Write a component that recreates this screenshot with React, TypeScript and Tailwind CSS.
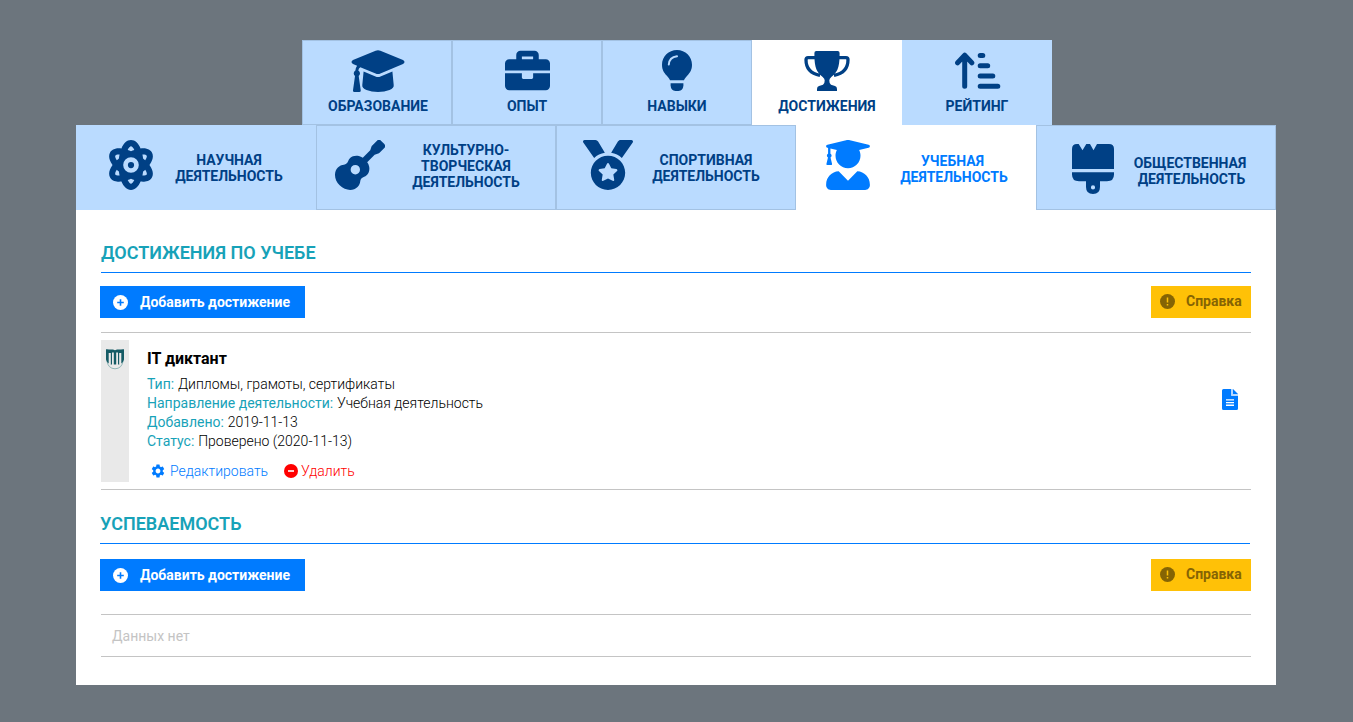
import React from "react";
import { FaAtom, FaBriefcase, FaGuitar, FaMedal, FaUserGraduate } from "react-icons/fa";
import { MdSettings } from "react-icons/md";

function CapIcon() {
  return (
    <svg width="54" height="43" viewBox="0 0 54 43" fill="currentColor" className="-ml-px">
      <path d="M24.6 .8Q27 -.2 29.4 .8L52 10.1Q55 12 52 13.9L29.4 23.6Q27 24.6 24.6 23.6L9.3 17.2Q7.7 18.2 7.3 20.4Q9 21.5 9 23.3Q9 25 7.7 26L9.7 40.2Q10 42 8.3 42H3.5Q1.7 42 2 40.2L4 26Q2.7 25 2.7 23.3Q2.7 21.4 4.4 20.4Q4.7 17.7 6.1 15.8L2 13.9Q-1 12 2 10.1Z" />
      <path d="M12.6 21.6L24.5 26.6Q27 27.6 29.5 26.6L41.4 21.6L42.7 35Q43.2 38.2 38.5 40Q33.5 42 27 42Q20.5 42 15.5 40Q10.8 38.2 11.3 35Z" />
    </svg>
  );
}

function BulbIcon() {
  return (
    <svg width="30" height="42" viewBox="0 0 30 42" fill="currentColor">
      <path d="M15 0C23.4 0 30 6.5 30 14.7C30 19.7 28 22.5 25.4 25.6C23.4 28 22.5 29 22 30.2H8C7.5 29 6.6 28 4.6 25.6C2 22.5 0 19.7 0 14.7C0 6.5 6.6 0 15 0Z" />
      <path d="M8.6 33.2H21.4V35.6Q21 41 16.5 41H13.5Q9 41 8.6 35.6Z" />
      <path d="M6.8 14.5Q7.3 7.3 15 6.3" fill="none" stroke="#badbff" strokeWidth="2" strokeLinecap="round" />
    </svg>
  );
}

function TrophyIcon() {
  return (
    <svg width="46" height="40" viewBox="0 0 46 40" fill="currentColor">
      <path d="M12.3 0H33.7Q35.6 0 35.6 2C35.6 12 35.2 20.5 27.3 26Q25.3 27.5 25.3 29.5Q25.3 33 27 33.7L31 35Q33 35.7 33 38V40H13V38Q13 35.7 15 35L19 33.7Q20.7 33 20.7 29.5Q20.7 27.5 18.7 26C10.8 20.5 10.4 12 10.4 2Q10.4 0 12.3 0Z" />
      <path d="M12 6.7H4Q2 6.7 2 8.7C2 16.5 6.5 22.5 16 24.3M34 6.7H42Q44 6.7 44 8.7C44 16.5 39.5 22.5 30 24.3" fill="none" stroke="currentColor" strokeWidth="3.3" />
    </svg>
  );
}

function RatingIcon() {
  return (
    <svg width="46" height="38" viewBox="0 0 46 38" fill="none" stroke="currentColor" strokeWidth="5" strokeLinecap="round" className="ml-[2px]">
      <path d="M9.7 34.2V3.5M2.6 10.8L9.7 3.2L16.8 10.8" strokeLinejoin="round" />
      <path d="M25.2 3.5H27.8M25.2 13.7H32.7M25.2 23.9H37.8M25.2 34.2H42.8" />
    </svg>
  );
}

function BrushIcon() {
  return (
    <svg width="42" height="50" viewBox="0 0 42 50" fill="currentColor">
      <path d="M0 25V5Q0 0 5 0H6.7L10.5 6.2L14.3 0H18L21.5 6.2L25 0H37Q42 0 42 5V25Z" />
      <path fillRule="evenodd" d="M0 28.2H42V30.5Q42 37.3 35 37.3H28V43Q28 50 21 50Q14 50 14 43V37.3H7Q0 37.3 0 30.5ZM21 41.3A2.1 2.1 0 1 0 21 45.5A2.1 2.1 0 1 0 21 41.3Z" />
    </svg>
  );
}

function DocIcon() {
  return (
    <svg width="16" height="21" viewBox="0 0 16 21" className="mt-[49px] mr-[13px] ml-auto">
      <path d="M1.5 0H9.3V6.7H16V19.5Q16 21 14.5 21H1.5Q0 21 0 19.5V1.5Q0 0 1.5 0Z" fill="#007bff" />
      <path d="M11 0L16 5H11Z" fill="#007bff" />
      <path d="M9.3 0H11V5H16V6.7H9.3Z" fill="#b5d8ff" />
      <path d="M4 10.9H12M4 13.6H12M4 16.3H12" stroke="#fff" strokeWidth="1.4" />
    </svg>
  );
}

function Crest() {
  return (
    <svg width="18" height="21" viewBox="0 0 18 21">
      <path d="M1 10V12Q2 19.5 9 19.8Q16 19.5 17 12V10" fill="none" stroke="#8fb5b6" strokeWidth="1" />
      <path d="M0 .3Q1.5 -.1 3 .6H7L9 1.2L11 .6H15Q16.5 -.1 18 .3V10.5Q17.5 13 15.3 14.5V4H13.3V15.5H12V3.4H10.2V15.5H7.8V3.4H6V15.5H4.7V4H2.7V14.5Q.5 13 0 10.5Z" fill="#155b65" />
      <path d="M3.7 4V15M14.3 4V15" stroke="#e9e9e9" strokeWidth="1.4" />
    </svg>
  );
}

function TopTab({ label, icon, tone }: { label: string; icon: React.ReactNode; tone: string }) {
  return (
    <div className={`flex h-[85px] w-[150px] flex-col items-center border ${tone}`}>
      <div className="flex h-[57px] items-start pt-[9px]">{icon}</div>
      <span className="text-[14px] leading-[16px] font-bold">{label}</span>
    </div>
  );
}

function AddButton() {
  return (
    <button className="flex h-8 w-[205px] items-center bg-[#007bff] pl-[13px] text-[14px] font-bold text-white">
      <svg width="15" height="15" viewBox="0 0 15 15" className="mt-px mr-[12px]">
        <circle cx="7.5" cy="7.5" r="7.5" fill="#fff" />
        <path d="M7.5 4.2V10.8M4.2 7.5H10.8" stroke="#007bff" strokeWidth="1.6" />
      </svg>
      <span>Добавить достижение</span>
    </button>
  );
}

function HelpButton() {
  return (
    <button className="flex h-8 w-[100px] items-center bg-[#ffc107] pb-px pl-[9px] text-[14px] font-bold text-[#856404]">
      <svg width="15" height="15" viewBox="0 0 15 15" className="mr-[11px]">
        <circle cx="7.5" cy="7.5" r="7.5" fill="#856404" />
        <path d="M7.5 3.5V8.6M7.5 10V11.6" stroke="#ffc107" strokeWidth="1.5" />
      </svg>
      <span>Справка</span>
    </button>
  );
}

function Field({ name, value }: { name: string; value: string }) {
  return (
    <p className="h-[19px] whitespace-nowrap">
      <span className="mr-[0.4px] font-normal text-[#17a2b8]">{name}:</span> {value}
    </p>
  );
}

const plain = "border-[#badbff] bg-[#badbff]";
const outlined = "border-[#a3c2e3] bg-[#badbff]";
const label = "text-center text-[14px] leading-[16px] font-bold";

export default function App() {
  return (
    <div className="h-[722px] w-[1353px] bg-[#6c757d] pt-10 pl-[76px] font-['Roboto',sans-serif]">
      <nav className="ml-[226px] flex text-[#004085]">
        <TopTab label="ОБРАЗОВАНИЕ" icon={<CapIcon />} tone={`pl-[2px] ${outlined}`} />
        <TopTab label="ОПЫТ" icon={<FaBriefcase size={45} className="-mt-[2px]" />} tone={outlined} />
        <TopTab label="НАВЫКИ" icon={<BulbIcon />} tone={outlined} />
        <TopTab label="ДОСТИЖЕНИЯ" icon={<div className="pt-px"><TrophyIcon /></div>} tone="border-white bg-white" />
        <TopTab label="РЕЙТИНГ" icon={<div className="pt-0.5"><RatingIcon /></div>} tone={plain} />
      </nav>
      <nav className="flex w-[1200px] text-[#004085]">
        <div className={`flex h-[85px] w-60 border pt-[14px] pl-[32px] ${plain}`}>
          <FaAtom className="h-[50px] w-11" />
          <div className={`ml-[14px] w-[124px] pt-[12px] ${label}`}>НАУЧНАЯ ДЕЯТЕЛЬНОСТЬ</div>
        </div>
        <div className={`flex h-[85px] w-60 border pt-[14px] pl-[18px] ${outlined}`}>
          <FaGuitar size={50} />
          <div className={`ml-[18px] w-[126px] pt-[2px] ${label}`}>КУЛЬТУРНО-<br />ТВОРЧЕСКАЯ ДЕЯТЕЛЬНОСТЬ</div>
        </div>
        <div className={`flex h-[85px] w-60 border pt-[14px] pl-[26px] ${outlined}`}>
          <FaMedal size={50} />
          <div className={`ml-[10px] w-[126px] pt-[12px] ${label}`}>СПОРТИВНАЯ ДЕЯТЕЛЬНОСТЬ</div>
        </div>
        <div className="flex h-[85px] w-60 border border-white bg-white pt-[14px] pl-[29px] text-[#007bff]">
          <FaUserGraduate className="h-[50px] w-11" />
          <div className={`ml-[21px] w-[126px] pt-[13px] ${label}`}><span className="mr-[3px]">УЧЕБНАЯ</span><br />ДЕЯТЕЛЬНОСТЬ</div>
        </div>
        <div className={`flex h-[85px] w-60 border pt-[18px] pl-[35px] ${outlined}`}>
          <BrushIcon />
          <div className={`ml-[13px] w-[126px] pt-[11px] ${label}`}>ОБЩЕСТВЕННАЯ<br /><span className="ml-[3px]">ДЕЯТЕЛЬНОСТЬ</span></div>
        </div>
      </nav>
      <main className="flex h-[475px] w-[1200px] flex-col bg-white pr-[25px] pl-[24px]">
        <h2 className="ml-px h-[63px] border-b border-[#007bff] pt-[31px] text-[18px] leading-[24px] font-semibold text-[#17a2b8]">ДОСТИЖЕНИЯ ПО УЧЕБЕ</h2>
        <div className="mt-[13px] flex justify-between">
          <AddButton />
          <HelpButton />
        </div>
        <article className="mt-[14px] ml-px flex h-[158px] border-y border-[#c4c4c4] pt-[7px]">
          <div className="flex h-[142px] w-7 justify-center bg-[#e9e9e9] pt-[9px]"><Crest /></div>
          <div className="ml-[18px] text-[14px] leading-[19px] font-light text-black">
            <h3 className="mb-[5px] pt-[8px] text-[16px] leading-[22px] font-bold">IT диктант</h3>
            <Field name="Тип" value="Дипломы, грамоты, сертификаты" />
            <Field name="Направление деятельности" value="Учебная деятельность" />
            <Field name="Добавлено" value="2019-11-13" />
            <Field name="Статус" value="Проверено (2020-11-13)" />
            <div className="mt-[11px] flex items-center">
              <a className="ml-[3px] flex items-center text-[#007bff]"><MdSettings size={16} className="-mt-px mr-1" />Редактировать</a>
              <a className="ml-[16px] flex items-center text-[#ff0000]">
                <svg width="14" height="14" viewBox="0 0 14 14" className="-mt-px mr-[3px]">
                  <circle cx="7" cy="7" r="7" fill="#ff0000" />
                  <path d="M4 7H10" stroke="#fff" strokeWidth="1.6" />
                </svg>
                Удалить
              </a>
            </div>
          </div>
          <DocIcon />
        </article>
        <h2 className="mr-px h-[54px] border-b border-[#007bff] pt-[22px] text-[18px] leading-[24px] font-semibold text-[#17a2b8]">УСПЕВАЕМОСТЬ</h2>
        <div className="mt-[15px] flex justify-between">
          <AddButton />
          <HelpButton />
        </div>
        <div className="mt-[23px] ml-px flex h-[43px] items-center border-y border-[#c4c4c4] pt-[2px] pl-[11px] text-[14px] text-[#c4c4c4]">Данных нет</div>
      </main>
    </div>
  );
}
